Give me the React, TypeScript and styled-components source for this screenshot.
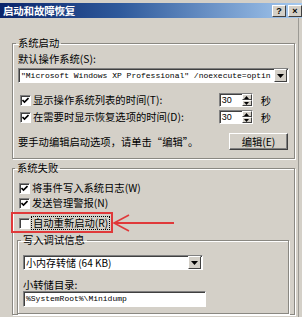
import styled, { createGlobalStyle } from "styled-components";

const GlobalStyle = createGlobalStyle`
  html, body {
    margin: 0;
    padding: 0;
    background: #d4d0c8;
  }
`;

const cjkFont = `"Noto Sans CJK SC", "Liberation Sans", sans-serif`;

const StyledWindow = styled.div`
  width: 302px;
  height: 317px;
  overflow: hidden;
  box-sizing: border-box;
  padding-top: 3px;
  background: #d4d0c8;
  font-family: ${cjkFont};
  font-size: 10.3px;
  color: #000;
  display: flex;
  flex-direction: column;
`;

const StyledTitleBar = styled.div`
  height: 15px;
  flex: none;
  display: flex;
  align-items: flex-end;
  gap: 2px;
  padding-left: 3px;
  background: linear-gradient(to right, #0a246a 0%, #2f5a9c 40%, #a6caf0 100%);
`;

const StyledTitle = styled.span`
  flex: 1;
  align-self: center;
  color: #fff;
  font-weight: bold;
  font-size: 10.5px;
  line-height: 15px;
  letter-spacing: -0.2px;
`;

const StyledCaptionButton = styled.span`
  width: 12px;
  height: 10px;
  flex: none;
  margin-bottom: 1px;
  box-sizing: content-box;
  background: #d4d0c8;
  border: 1px solid;
  border-color: #fff #404040 #404040 #fff;
  display: flex;
  align-items: center;
  justify-content: center;
  font: bold 9px "Liberation Sans", sans-serif;
  line-height: 1;
`;

const StyledBody = styled.div`
  flex: 1;
  margin-right: 3px;
  padding: 19px 3px 0 12px;
  border-right: 1px solid #9c9a94;
`;

const StyledGroup = styled.fieldset<{ $bottom?: number; $left?: number; $top?: number }>`
  margin: ${(p) => p.$top ?? 0}px 0 0 0;
  padding: 0 5px ${(p) => p.$bottom ?? 0}px ${(p) => p.$left ?? 5}px;
  min-width: 0;
  border: 1px solid #8a8882;
  box-shadow: inset 1px 1px 0 #fff, 1px 1px 0 #fff;
`;

const StyledLegend = styled.legend`
  margin-left: -2px;
  padding: 0 2px;
  line-height: 12px;
`;

const StyledLabel = styled.div<{ $top: number }>`
  margin-top: ${(p) => p.$top}px;
  line-height: 12px;
  white-space: nowrap;
`;

const StyledCombo = styled.div<{ $top: number; $width?: number }>`
  margin-top: ${(p) => p.$top}px;
  width: ${(p) => (p.$width ? `${p.$width}px` : "auto")};
  height: 15px;
  box-sizing: border-box;
  display: flex;
  align-items: center;
  background: #fff;
  border: 1px solid;
  border-color: #808080 #fff #fff #808080;
  box-shadow: inset 1px 1px 0 #404040;
  overflow: hidden;
`;

const StyledComboText = styled.span<{ $mono?: boolean }>`
  flex: 1;
  padding-left: 2px;
  white-space: nowrap;
  overflow: hidden;
  font-family: ${(p) => (p.$mono ? `"Liberation Mono", monospace` : cjkFont)};
  font-size: ${(p) => (p.$mono ? "8px" : "10px")};
  line-height: 13px;
`;

const StyledDropButton = styled.span`
  width: 11px;
  height: 11px;
  flex: none;
  margin-right: 1px;
  background: #d4d0c8;
  border: 1px solid;
  border-color: #fff #404040 #404040 #fff;
  display: flex;
  align-items: center;
  justify-content: center;
`;

const StyledRow = styled.div<{ $top: number }>`
  position: relative;
  margin-top: ${(p) => p.$top}px;
  height: 14px;
  display: flex;
  align-items: center;
  white-space: nowrap;
`;

const StyledCheckBox = styled.span`
  width: 11px;
  height: 11px;
  flex: none;
  margin: 0 2px 0 2px;
  box-sizing: border-box;
  background: #fff;
  border: 1px solid;
  border-color: #808080 #fff #fff #808080;
  box-shadow: inset 1px 1px 0 #404040;
  display: flex;
  align-items: center;
  justify-content: center;
`;

const StyledRowText = styled.span<{ $focused?: boolean }>`
  flex: 1;
  line-height: 12px;
  ${(p) =>
    p.$focused &&
    `flex: none;
     padding: 0 1px;
     outline: 1px dotted #000;
     outline-offset: 0;`}
`;

const StyledSpin = styled.div`
  width: 34px;
  height: 14px;
  box-sizing: border-box;
  flex: none;
  display: flex;
  background: #fff;
  border: 1px solid;
  border-color: #808080 #fff #fff #808080;
  box-shadow: inset 1px 1px 0 #404040;
`;

const StyledSpinValue = styled.span`
  flex: 1;
  padding-left: 2px;
  font-family: "Liberation Sans", sans-serif;
  font-size: 9px;
  line-height: 12px;
`;

const StyledSpinButtons = styled.span`
  width: 10px;
  display: flex;
  flex-direction: column;
`;

const StyledSpinButton = styled.span`
  flex: 1;
  background: #d4d0c8;
  border: 1px solid;
  border-color: #fff #404040 #404040 #fff;
  display: flex;
  align-items: center;
  justify-content: center;
`;

const StyledUnit = styled.span`
  margin: 0 18px 0 8px;
`;

const StyledHelpRow = styled.div`
  margin-top: 9px;
  display: flex;
  align-items: center;
  justify-content: space-between;
`;

const StyledButton = styled.button`
  width: 59px;
  height: 17px;
  margin-right: 1px;
  padding: 0;
  background: #d4d0c8;
  border: 1px solid;
  border-color: #fff #404040 #404040 #fff;
  box-shadow: inset -1px -1px 0 #808080;
  font-family: ${cjkFont};
  font-size: 10.3px;
  line-height: 12px;
  color: #000;
`;

const StyledHighlight = styled.span`
  position: absolute;
  left: -6px;
  top: -4px;
  width: 102px;
  height: 21px;
  border: 2px solid #e0393a;
  box-sizing: border-box;
  pointer-events: none;
`;

const StyledArrow = styled.svg`
  position: absolute;
  left: 95px;
  top: -2px;
`;

const StyledField = styled.div`
  width: 183px;
  height: 16px;
  box-sizing: border-box;
  background: #fff;
  border: 1px solid;
  border-color: #808080 #fff #fff #808080;
  box-shadow: inset 1px 1px 0 #404040;
  padding-left: 2px;
  font-family: "Liberation Mono", monospace;
  font-size: 8px;
  line-height: 14px;
  white-space: nowrap;
`;

const DownTriangle = () => (
  <svg width="7" height="4" viewBox="0 0 7 4">
    <path d="M0 0H7L3.5 4Z" fill="#000" />
  </svg>
);

const SmallTriangle = ({ up }: { up?: boolean }) => (
  <svg width="5" height="3" viewBox="0 0 5 3">
    <path d={up ? "M0 3H5L2.5 0Z" : "M0 0H5L2.5 3Z"} fill="#000" />
  </svg>
);

const Check = ({ checked }: { checked: boolean }) => (
  <StyledCheckBox>
    {checked && (
      <svg width="7" height="7" viewBox="0 0 7 7">
        <path d="M0.5 3L2.5 5L6.5 1" stroke="#000" strokeWidth="1.6" fill="none" />
      </svg>
    )}
  </StyledCheckBox>
);

const Spin = ({ value }: { value: string }) => (
  <StyledSpin>
    <StyledSpinValue>{value}</StyledSpinValue>
    <StyledSpinButtons>
      <StyledSpinButton>
        <SmallTriangle up />
      </StyledSpinButton>
      <StyledSpinButton>
        <SmallTriangle />
      </StyledSpinButton>
    </StyledSpinButtons>
  </StyledSpin>
);

export default function App() {
  return (
    <>
      <GlobalStyle />
      <StyledWindow>
        <StyledTitleBar>
          <StyledTitle>启动和故障恢复</StyledTitle>
          <StyledCaptionButton>?</StyledCaptionButton>
          <StyledCaptionButton>×</StyledCaptionButton>
        </StyledTitleBar>
        <StyledBody>
          <StyledGroup $bottom={8}>
            <StyledLegend>系统启动</StyledLegend>
            <StyledLabel $top={4}>默认操作系统(S):</StyledLabel>
            <StyledCombo $top={3}>
              <StyledComboText $mono>
                "Microsoft Windows XP Professional" /noexecute=optin
              </StyledComboText>
              <StyledDropButton>
                <DownTriangle />
              </StyledDropButton>
            </StyledCombo>
            <StyledRow $top={10}>
              <Check checked />
              <StyledRowText>显示操作系统列表的时间(T):</StyledRowText>
              <Spin value="30" />
              <StyledUnit>秒</StyledUnit>
            </StyledRow>
            <StyledRow $top={3}>
              <Check checked />
              <StyledRowText>在需要时显示恢复选项的时间(D):</StyledRowText>
              <Spin value="30" />
              <StyledUnit>秒</StyledUnit>
            </StyledRow>
            <StyledHelpRow>
              <span>要手动编辑启动选项，请单击“编辑”。</span>
              <StyledButton>编辑(E)</StyledButton>
            </StyledHelpRow>
          </StyledGroup>
          <StyledGroup $top={3} $left={4}>
            <StyledLegend>系统失败</StyledLegend>
            <StyledRow $top={7}>
              <Check checked />
              <StyledRowText>将事件写入系统日志(W)</StyledRowText>
            </StyledRow>
            <StyledRow $top={1}>
              <Check checked />
              <StyledRowText>发送管理警报(N)</StyledRowText>
            </StyledRow>
            <StyledRow $top={6}>
              <Check checked={false} />
              <StyledRowText $focused>自动重新启动(R)</StyledRowText>
              <StyledHighlight />
              <StyledArrow width="64" height="18" viewBox="0 0 64 18">
                <path d="M2 9H62" stroke="#e0393a" strokeWidth="2" />
                <path d="M17 1L2 9L17 17" stroke="#e0393a" strokeWidth="1.6" fill="none" />
              </StyledArrow>
            </StyledRow>
            <StyledGroup $top={4} $bottom={6}>
              <StyledLegend>写入调试信息</StyledLegend>
              <StyledCombo $top={9} $width={180}>
                <StyledComboText>小内存转储 (64 KB)</StyledComboText>
                <StyledDropButton>
                  <DownTriangle />
                </StyledDropButton>
              </StyledCombo>
              <StyledLabel $top={9}>小转储目录:</StyledLabel>
              <StyledField>%SystemRoot%\Minidump</StyledField>
            </StyledGroup>
          </StyledGroup>
        </StyledBody>
      </StyledWindow>
    </>
  );
}
